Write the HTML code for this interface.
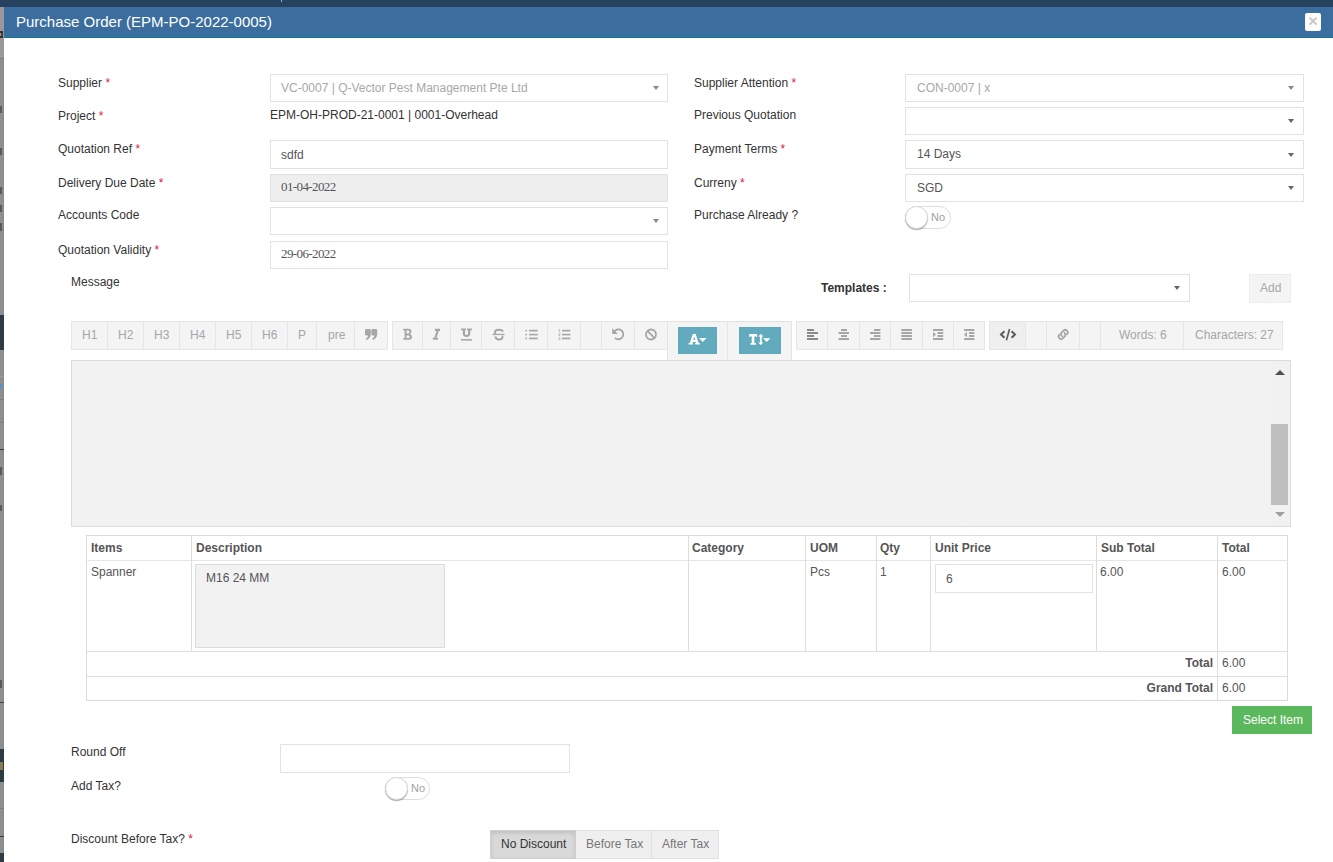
<!DOCTYPE html>
<html><head><meta charset="utf-8">
<style>
html,body{margin:0;padding:0;width:1333px;height:862px;overflow:hidden;background:#fff;}
body{font-family:"Liberation Sans",sans-serif;font-size:12px;color:#333;position:relative;}
.a{position:absolute;}
.t{position:absolute;white-space:nowrap;line-height:16px;font-size:12px;}
.req{color:#e2173a;}
.inp{position:absolute;box-sizing:border-box;border:1px solid #e2e2e2;background:#fff;}
.caret{position:absolute;width:0;height:0;border-left:3px solid transparent;border-right:3px solid transparent;border-top:4px solid #888;}
.lbl{color:#333;}
.val{color:#555;}
.serif{font-family:"Liberation Serif",serif;}
.tb{position:absolute;top:321px;height:29px;box-sizing:border-box;background:#f4f4f4;border:1px solid #e6e6e6;}
.sep{position:absolute;top:0;bottom:0;width:1px;background:#e6e6e6;}
.tbt{position:absolute;top:5px;color:#a6a6a6;font-size:12px;line-height:16px;white-space:nowrap;}
.cell{position:absolute;background:#ddd;}
.th{font-weight:bold;color:#555;}
</style></head><body>
<!-- background page strip -->
<div class="a" style="left:0;top:0;width:1333px;height:7px;background:#25435f"></div>
<div class="a" style="left:281px;top:0;width:1px;height:2px;background:#9fb0c0"></div>
<div class="a" style="left:0;top:7px;width:4px;height:855px;background:#8e8f91"></div>
<div class="a" style="left:3px;top:7px;width:1px;height:855px;background:#878889"></div>
<div class="a" style="left:0;top:7px;width:4px;height:51px;background:#999"></div>
<div class="a" style="left:0;top:58px;width:4px;height:1px;background:#7d7d7d"></div>
<div class="a" style="left:0;top:31px;width:3px;height:2px;background:#333"></div><div class="a" style="left:1px;top:33px;width:2px;height:3px;background:#444"></div><div class="a" style="left:0;top:36px;width:3px;height:2px;background:#333"></div>
<div class="a" style="left:0;top:106px;width:2px;height:7px;background:#5a5a5a"></div>
<div class="a" style="left:0;top:148px;width:2px;height:7px;background:#5a5a5a"></div>
<div class="a" style="left:0;top:187px;width:2px;height:7px;background:#5a5a5a"></div>
<div class="a" style="left:0;top:205px;width:2px;height:7px;background:#5a5a5a"></div>
<div class="a" style="left:0;top:223px;width:2px;height:8px;background:#5a5a5a"></div>
<div class="a" style="left:0;top:315px;width:4px;height:35px;background:#2e3b43"></div>
<div class="a" style="left:0;top:376px;width:4px;height:1px;background:#9a9a9a"></div>
<div class="a" style="left:0;top:384px;width:2px;height:5px;background:#5b8fc0"></div>
<div class="a" style="left:0;top:399px;width:4px;height:1px;background:#7f7f7f"></div>
<div class="a" style="left:0;top:422px;width:4px;height:1px;background:#7f7f7f"></div>
<div class="a" style="left:0;top:449px;width:4px;height:1px;background:#3a3a3a"></div>
<div class="a" style="left:0;top:467px;width:2px;height:8px;background:#5a5a5a"></div>
<div class="a" style="left:0;top:505px;width:2px;height:6px;background:#5a5a5a"></div>
<div class="a" style="left:0;top:680px;width:2px;height:8px;background:#5a5a5a"></div>
<div class="a" style="left:0;top:702px;width:4px;height:1px;background:#444"></div>
<div class="a" style="left:0;top:749px;width:4px;height:33px;background:#2e3b43"></div>
<div class="a" style="left:0;top:762px;width:3px;height:8px;background:#8a7a50"></div>
<div class="a" style="left:0;top:808px;width:4px;height:1px;background:#7f7f7f"></div>
<div class="a" style="left:0;top:836px;width:4px;height:1px;background:#3a3a3a"></div>
<div class="a" style="left:0;top:853px;width:4px;height:9px;background:#2e3b43"></div>

<!-- modal -->
<div class="a" style="left:4px;top:7px;width:1329px;height:855px;background:#fff"></div>
<div class="a" style="left:4px;top:7px;width:1329px;height:30px;background:#3b6e9e"></div>
<div class="a" style="left:4px;top:37px;width:1329px;height:1px;background:#0e7a96"></div>
<div class="t" style="left:16px;top:13px;font-size:15px;line-height:18px;color:#fff">Purchase Order (EPM-PO-2022-0005)</div>
<div class="a" style="left:1305px;top:13px;width:16px;height:18px;background:#fff;border-radius:2px"></div>
<svg class="a" style="left:1305px;top:13px" width="16" height="18"><path d="M4.6,4.6L11.6,11.6M11.6,4.6L4.6,11.6" stroke="#c6c6c6" stroke-width="2"/></svg>

<!-- left labels -->
<div class="t lbl" style="left:58px;top:75px">Supplier <span class="req">*</span></div>
<div class="t lbl" style="left:58px;top:108px">Project <span class="req">*</span></div>
<div class="t lbl" style="left:58px;top:141px">Quotation Ref <span class="req">*</span></div>
<div class="t lbl" style="left:58px;top:175px">Delivery Due Date <span class="req">*</span></div>
<div class="t lbl" style="left:58px;top:207px">Accounts Code</div>
<div class="t lbl" style="left:58px;top:242px">Quotation Validity <span class="req">*</span></div>

<!-- left inputs -->
<div class="inp" style="left:270px;top:74px;width:398px;height:28px"></div>
<div class="t" style="left:281px;top:80px;color:#a8a8a8">VC-0007 | Q-Vector Pest Management Pte Ltd</div>
<div class="caret" style="left:653px;top:86px"></div>
<div class="t val" style="left:270px;top:107px;color:#333">EPM-OH-PROD-21-0001 | 0001-Overhead</div>
<div class="inp" style="left:270px;top:140px;width:398px;height:29px"></div>
<div class="t val" style="left:281px;top:147px">sdfd</div>
<div class="inp" style="left:270px;top:174px;width:398px;height:28px;background:#eee"></div>
<div class="t val serif" style="left:281px;top:179px;font-size:13px;letter-spacing:-0.6px">01-04-2022</div>
<div class="inp" style="left:270px;top:207px;width:398px;height:28px"></div>
<div class="caret" style="left:653px;top:219px"></div>
<div class="inp" style="left:270px;top:241px;width:398px;height:28px"></div>
<div class="t val serif" style="left:281px;top:246px;font-size:13px;letter-spacing:-0.6px">29-06-2022</div>

<!-- right labels -->
<div class="t lbl" style="left:694px;top:75px">Supplier Attention <span class="req">*</span></div>
<div class="t lbl" style="left:694px;top:107px">Previous Quotation</div>
<div class="t lbl" style="left:694px;top:141px">Payment Terms <span class="req">*</span></div>
<div class="t lbl" style="left:694px;top:175px">Curreny <span class="req">*</span></div>
<div class="t lbl" style="left:694px;top:207px">Purchase Already ?</div>

<!-- right inputs -->
<div class="inp" style="left:905px;top:74px;width:399px;height:28px"></div>
<div class="t" style="left:917px;top:80px;color:#a8a8a8">CON-0007 | x</div>
<div class="caret" style="left:1288px;top:86px"></div>
<div class="inp" style="left:905px;top:107px;width:399px;height:28px"></div>
<div class="caret" style="left:1288px;top:119px;border-top-color:#666"></div>
<div class="inp" style="left:905px;top:140px;width:399px;height:29px"></div>
<div class="t val" style="left:917px;top:146px">14 Days</div>
<div class="caret" style="left:1288px;top:153px;border-top-color:#666"></div>
<div class="inp" style="left:905px;top:174px;width:399px;height:28px"></div>
<div class="t val" style="left:917px;top:180px">SGD</div>
<div class="caret" style="left:1288px;top:186px;border-top-color:#666"></div>

<!-- toggle purchase already -->
<div class="a" style="left:905px;top:206px;width:46px;height:23px;box-sizing:border-box;border:1px solid #ddd;border-radius:12px;background:#fff"></div>
<div class="a" style="left:905px;top:206px;width:23px;height:23px;box-sizing:border-box;border-radius:50%;background:#fff;border:1px solid #d6d6d6;box-shadow:0 1px 1px rgba(0,0,0,.3)"></div>
<div class="t" style="left:931px;top:209px;font-size:11px;color:#a0a0a0">No</div>


<!-- message / templates -->
<div class="t lbl" style="left:71px;top:274px">Message</div>
<div class="t" style="left:821px;top:280px;font-weight:bold;color:#333">Templates :</div>
<div class="inp" style="left:909px;top:274px;width:281px;height:28px"></div>
<div class="caret" style="left:1174px;top:286px;border-top-color:#666"></div>
<div class="a" style="left:1249px;top:274px;width:42px;height:29px;box-sizing:border-box;background:#f4f4f4;border:1px solid #ececec"></div>
<div class="t" style="left:1260px;top:280px;color:#a6a6a6">Add</div>

<!-- toolbar group 1 -->
<div class="tb" style="left:71px;width:317px">
  <div class="sep" style="left:35px"></div><div class="sep" style="left:71px"></div><div class="sep" style="left:107px"></div>
  <div class="sep" style="left:143px"></div><div class="sep" style="left:179px"></div><div class="sep" style="left:215px"></div>
  <div class="sep" style="left:244px"></div><div class="sep" style="left:282px"></div>
  <div class="tbt" style="left:10px">H1</div><div class="tbt" style="left:46px">H2</div><div class="tbt" style="left:82px">H3</div>
  <div class="tbt" style="left:118px">H4</div><div class="tbt" style="left:154px">H5</div><div class="tbt" style="left:190px">H6</div>
  <div class="tbt" style="left:226px">P</div><div class="tbt" style="left:256px">pre</div>
</div>
<!-- toolbar group 2 -->
<div class="tb" style="left:392px;width:276px">
  <div class="sep" style="left:29px"></div><div class="sep" style="left:57px"></div><div class="sep" style="left:88px"></div>
  <div class="sep" style="left:121px"></div><div class="sep" style="left:154px"></div><div class="sep" style="left:187px"></div>
  <div class="sep" style="left:208px"></div><div class="sep" style="left:241px"></div>
</div>
<!-- toolbar group 3 (color) -->
<div class="a" style="left:667px;top:321px;width:125px;height:39px;box-sizing:border-box;background:#f4f4f4;border:1px solid #e3e3e3;border-bottom:none">
  <div class="sep" style="left:59px"></div>
</div>
<div class="a" style="left:678px;top:327px;width:39px;height:27px;background:#62aabd"></div>
<div class="a" style="left:739px;top:327px;width:42px;height:27px;background:#62aabd"></div>
<!-- toolbar group 4 -->
<div class="tb" style="left:796px;width:189px">
  <div class="sep" style="left:30px"></div><div class="sep" style="left:62px"></div><div class="sep" style="left:93px"></div>
  <div class="sep" style="left:125px"></div><div class="sep" style="left:156px"></div>
</div>
<!-- toolbar group 5 -->
<div class="tb" style="left:989px;width:294px">
  <div class="a" style="left:0;top:0;width:35px;height:27px;background:#efefef"></div>
  <div class="sep" style="left:35px"></div><div class="sep" style="left:56px"></div><div class="sep" style="left:89px"></div>
  <div class="sep" style="left:110px"></div><div class="sep" style="left:193px"></div>
  <div class="tbt" style="left:129px">Words: 6</div>
  <div class="tbt" style="left:205px">Characters: 27</div>
</div>


<!-- toolbar icons -->
<svg class="a" style="left:0;top:0" width="1333" height="862" viewBox="0 0 1333 862">
 <g fill="#a6a6a6">
  <!-- quote -->
  <path d="M365,330.2q0,-1.2 1.2,-1.2h3.4q1.2,0 1.2,1.2v3.6q0,4.6 -4.2,6.2l-0.9,-1.3q2.2,-1 2.4,-3.2h-1.9q-1.2,0 -1.2,-1.2z"/>
  <path d="M371.4,330.2q0,-1.2 1.2,-1.2h3.4q1.2,0 1.2,1.2v3.6q0,4.6 -4.2,6.2l-0.9,-1.3q2.2,-1 2.4,-3.2h-1.9q-1.2,0 -1.2,-1.2z"/>
  <!-- UL -->
  <circle cx="526.2" cy="330.6" r="0.9"/><circle cx="526.2" cy="334.6" r="0.9"/><circle cx="526.2" cy="338.4" r="0.9"/>
  <rect x="529" y="329.8" width="8.8" height="1.7"/><rect x="529" y="333.8" width="8.8" height="1.6"/><rect x="529" y="337.6" width="8.8" height="1.7"/>
  <!-- OL -->
  <rect x="562" y="329.8" width="8.3" height="1.7"/><rect x="562" y="333.8" width="8.3" height="1.6"/><rect x="562" y="337.6" width="8.3" height="1.7"/>
  <!-- align left -->
  <g fill="#8a8a8a"><rect x="807" y="329" width="7" height="2"/><rect x="807" y="332" width="11" height="2"/><rect x="807" y="335" width="7" height="2"/><rect x="807" y="338" width="11" height="2"/></g>
  <!-- align center -->
  <rect x="841" y="329" width="6" height="2"/><rect x="838.6" y="332" width="10.4" height="2"/><rect x="841" y="335" width="6" height="2"/><rect x="838.6" y="338" width="10.4" height="2"/>
  <!-- align right -->
  <rect x="874" y="329" width="6.4" height="2"/><rect x="870" y="332" width="10.4" height="2"/><rect x="874" y="335" width="6.4" height="2"/><rect x="870" y="338" width="10.4" height="2"/>
  <!-- justify -->
  <rect x="901.3" y="329" width="10.6" height="2"/><rect x="901.3" y="332" width="10.6" height="2"/><rect x="901.3" y="335" width="10.6" height="2"/><rect x="901.3" y="338" width="10.6" height="2"/>
  <!-- indent -->
  <rect x="933" y="329" width="10.2" height="2"/><rect x="937.5" y="332" width="5.7" height="2"/><rect x="937.5" y="335" width="5.7" height="2"/><rect x="933" y="338" width="10.2" height="2"/>
  <path d="M933,331.8l3,2.7l-3,2.7z"/>
  <!-- outdent -->
  <rect x="964" y="329" width="10.4" height="2"/><rect x="969" y="332" width="5.4" height="2"/><rect x="969" y="335" width="5.4" height="2"/><rect x="964" y="338" width="10.4" height="2"/>
  <path d="M967,331.8l-3,2.7l3,2.7z"/>
 </g>
 <!-- OL numbers -->
 <g fill="#a6a6a6" font-family="Liberation Sans" font-size="4" font-weight="bold">
  <text x="558.3" y="332">1</text><text x="558.3" y="336">2</text><text x="558.3" y="340">3</text>
 </g>
 <!-- B I U S -->
 <g fill="#a6a6a6" fill-rule="evenodd">
  <path d="M403.1,328.8H408.6Q411.4,328.8 411.4,331.6Q411.4,333.3 410.1,334.1Q412,334.9 412,337.1Q412,339.8 408.8,339.8H403.1V338.3H404.6V330.3H403.1ZM406.5,330.6V333.5H408.2Q409.3,333.5 409.3,332Q409.3,330.6 408.2,330.6ZM406.5,335.4V338.1H408.4Q409.8,338.1 409.8,336.75Q409.8,335.4 408.4,335.4Z"/>
  <path d="M434.9,328.8H440.1V330.9H438.7L436.5,337.7H438V339.8H432.8V337.7H434.3L436.5,330.9H434.9Z"/>
  <path d="M461,328.4H466V330.3H465V333.6Q465,335.1 466.5,335.1Q468,335.1 468,333.6V330.3H467V328.4H472V330.3H470.3V333.6Q470.3,337 466.5,337Q462.8,337 462.8,333.6V330.3H461Z"/>
  <rect x="461" y="339.1" width="11" height="1.5"/>
  <rect x="492.4" y="333.8" width="12.2" height="1.3"/>
 </g>
 <g fill="none" stroke="#a6a6a6" stroke-width="1.9">
  <path d="M503,331.6Q502.2,329.7 498.8,329.7Q494.9,329.7 494.9,332.3Q494.9,333.3 495.8,333.9"/>
  <path d="M495.4,336.4Q495.8,339.5 498.9,339.5Q502.5,339.5 502.5,337Q502.5,336.3 502.1,335.8"/>
 </g>
 <g fill="none" stroke="#a6a6a6" stroke-width="1.8">
  <!-- undo -->
  <path d="M614.4,331.5A4.9,4.9 0 1 1 614.9,337.8"/>
  <!-- ban -->
  <circle cx="651" cy="334.5" r="5"/>
  <path d="M647.6,331.1L654.4,337.9"/>
 </g>
 <path fill="#a6a6a6" d="M612.2,328.2v5.8h5.7z"/>
 <!-- link -->
 <g fill="none" stroke="#a6a6a6" stroke-width="1.8" stroke-linecap="round" transform="translate(1063.2,334.4) rotate(-45)">
  <path d="M-2,0.3Q-2,-2.5 0.7,-2.5H2.9A2.5,2.5 0 0 1 2.9,2.5"/>
  <path d="M2,-0.3Q2,2.5 -0.7,2.5H-2.9A2.5,2.5 0 0 1 -2.9,-2.5"/>
 </g>
 <!-- code -->
 <g fill="none" stroke="#5a5a5a" stroke-width="2">
  <path d="M1004.4,331.2l-3.4,3.3l3.4,3.3"/>
  <path d="M1011.6,331.2l3.4,3.3l-3.4,3.3"/>
  <path d="M1009.6,329l-3.2,11.2" stroke-width="1.6"/>
 </g>
 <!-- A and T -->
 <g fill="#fff" fill-rule="evenodd">
  <path d="M692.8,334H695.7L698.6,343H699.8V344.6H695.2V343H696L695.6,342.1H692.8L692.4,343H693V344.6H688.5V343H689.8ZM693.2,339.8H695.3L694.25,336.7Z"/>
  <path d="M699,338.1H706.6L702.8,341.9Z"/>
  <path d="M749.2,334.1H757.1V337H755.9L755.6,336.2H754.4V343.1H755.9V344.8H750.5V343.1H751.7V336.2H750.5L750.3,337H749.2Z"/>
  <path d="M760.8,334L763.5,336.6H761.8V342.4H763.5L760.8,344.9L758.1,342.4H759.9V336.6H758.1Z"/>
  <path d="M762.9,338.2H770.5L766.7,341.9Z"/>
 </g>
</svg>

<!-- editor -->
<div class="a" style="left:71px;top:360px;width:1220px;height:167px;box-sizing:border-box;background:#f2f2f2;border:1px solid #dcdcdc"></div>
<div class="a" style="left:1269px;top:361px;width:20px;height:165px;background:#f1f1f1"></div>
<div class="a" style="left:1271px;top:424px;width:17px;height:81px;background:#bfbfbf"></div>
<div class="caret" style="left:1275px;top:370px;border-left-width:5px;border-right-width:5px;border-top:none;border-bottom:5px solid #505050"></div>
<div class="caret" style="left:1275px;top:512px;border-left-width:5px;border-right-width:5px;border-top:5px solid #a0a0a0"></div>

<!-- table -->
<div class="a" style="left:86px;top:535px;width:1202px;height:166px;box-sizing:border-box;border:1px solid #dcdcdc"></div>
<div class="cell" style="left:86px;top:560px;width:1202px;height:1px;background:#e6e6e6"></div>
<div class="cell" style="left:86px;top:651px;width:1202px;height:1px"></div>
<div class="cell" style="left:86px;top:676px;width:1202px;height:1px"></div>
<div class="cell" style="left:191px;top:535px;width:1px;height:117px"></div>
<div class="cell" style="left:688px;top:535px;width:1px;height:117px"></div>
<div class="cell" style="left:805px;top:535px;width:1px;height:117px"></div>
<div class="cell" style="left:876px;top:535px;width:1px;height:117px"></div>
<div class="cell" style="left:930px;top:535px;width:1px;height:117px"></div>
<div class="cell" style="left:1096px;top:535px;width:1px;height:117px"></div>
<div class="cell" style="left:1217px;top:535px;width:1px;height:166px"></div>
<div class="t th" style="left:91px;top:540px">Items</div>
<div class="t th" style="left:196px;top:540px">Description</div>
<div class="t th" style="left:692px;top:540px">Category</div>
<div class="t th" style="left:810px;top:540px">UOM</div>
<div class="t th" style="left:880px;top:540px">Qty</div>
<div class="t th" style="left:935px;top:540px">Unit Price</div>
<div class="t th" style="left:1101px;top:540px">Sub Total</div>
<div class="t th" style="left:1222px;top:540px">Total</div>
<div class="t val" style="left:91px;top:564px">Spanner</div>
<div class="a" style="left:195px;top:564px;width:250px;height:84px;box-sizing:border-box;background:#f2f2f2;border:1px solid #dcdcdc"></div>
<div class="t val" style="left:206px;top:570px">M16 24 MM</div>
<div class="t val" style="left:810px;top:564px">Pcs</div>
<div class="t val" style="left:880px;top:564px">1</div>
<div class="inp" style="left:935px;top:564px;width:158px;height:29px"></div>
<div class="t val" style="left:946px;top:571px">6</div>
<div class="t val" style="left:1100px;top:564px">6.00</div>
<div class="t val" style="left:1222px;top:564px">6.00</div>
<div class="t th" style="left:1100px;top:655px;width:113px;text-align:right">Total</div>
<div class="t val" style="left:1222px;top:655px">6.00</div>
<div class="t th" style="left:1060px;top:680px;width:153px;text-align:right">Grand Total</div>
<div class="t val" style="left:1222px;top:680px">6.00</div>

<!-- select item -->
<div class="a" style="left:1232px;top:706px;width:80px;height:28px;background:#5cb85c"></div>
<div class="t" style="left:1243px;top:712px;color:#fff">Select Item</div>

<!-- bottom -->
<div class="t lbl" style="left:71px;top:744px">Round Off</div>
<div class="inp" style="left:280px;top:744px;width:290px;height:29px"></div>
<div class="t lbl" style="left:71px;top:778px">Add Tax?</div>
<div class="a" style="left:385px;top:777px;width:45px;height:23px;box-sizing:border-box;border:1px solid #ddd;border-radius:12px;background:#fff"></div>
<div class="a" style="left:385px;top:777px;width:23px;height:23px;box-sizing:border-box;border-radius:50%;background:#fff;border:1px solid #d6d6d6;box-shadow:0 1px 1px rgba(0,0,0,.3)"></div>
<div class="t" style="left:411px;top:780px;font-size:11px;color:#a0a0a0">No</div>
<div class="t lbl" style="left:71px;top:831px">Discount Before Tax? <span class="req">*</span></div>
<div class="a" style="left:490px;top:830px;width:229px;height:29px;box-sizing:border-box;background:#efefef;border:1px solid #e0e0e0"></div>
<div class="a" style="left:490px;top:830px;width:86px;height:29px;box-sizing:border-box;background:#d9d9d9;border:1px solid #cfcfcf;box-shadow:inset 0 2px 4px rgba(0,0,0,.12)"></div>
<div class="cell" style="left:651px;top:830px;width:1px;height:29px;background:#e0e0e0"></div>
<div class="t" style="left:501px;top:836px;color:#333">No Discount</div>
<div class="t" style="left:586px;top:836px;color:#777">Before Tax</div>
<div class="t" style="left:662px;top:836px;color:#777">After Tax</div>

</body></html>
